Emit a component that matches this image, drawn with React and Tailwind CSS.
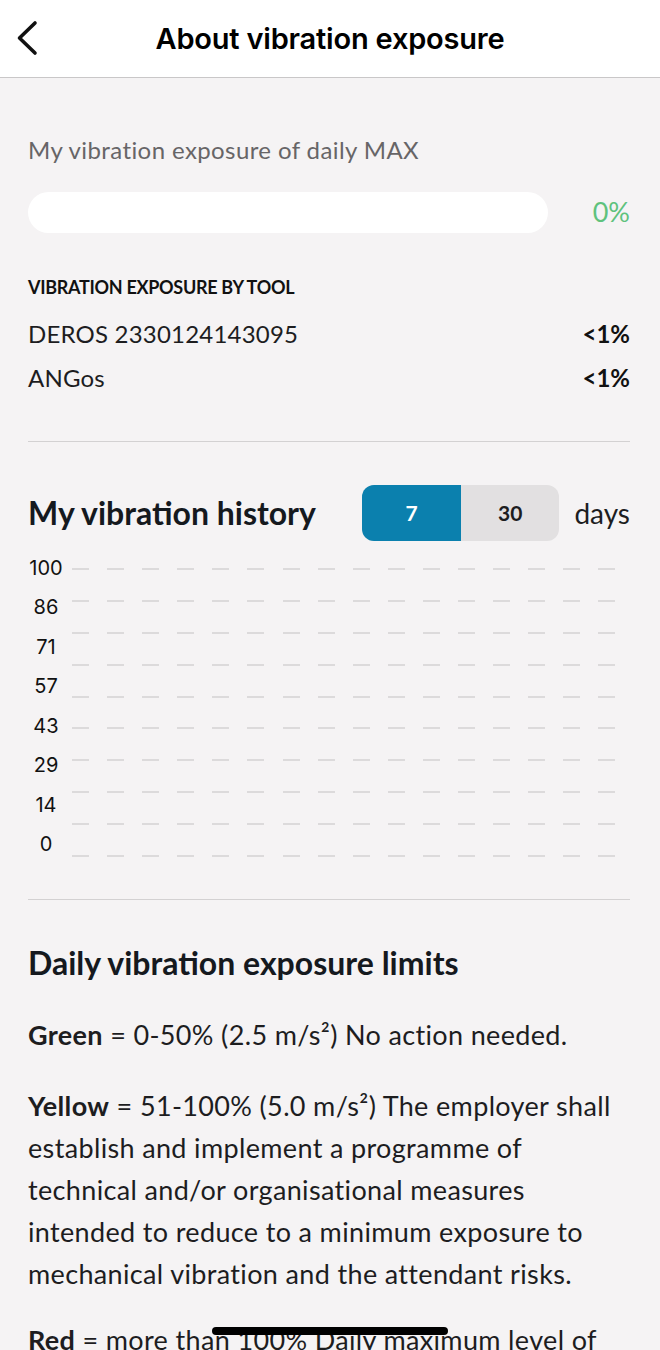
import React, { useState } from 'react';

const yLabels = ['100', '86', '71', '57', '43', '29', '14', '0'];
const gridLines = Array.from({ length: 10 });

const tools = [
  { name: 'DEROS 2330124143095', value: '<1%' },
  { name: 'ANGos', value: '<1%' },
];

// dashed grid row for the empty history chart
const DashLine = () => (
  <div className="h-[2px] w-full bg-[repeating-linear-gradient(to_right,#dcdadb_0_17px,transparent_17px_35.1px)]" />
);

export default function App() {
  const [range, setRange] = useState(7);

  return (
    <div className="relative min-h-screen w-full bg-[#f5f3f4] font-['Lato','Noto_Sans',sans-serif] text-[#1b1f24]">
      {/* Top bar */}
      <header className="relative flex h-[78px] items-center justify-center border-b border-[#c9c7c8] bg-white">
        <button className="absolute left-[14px] top-[19px] p-0">
          <svg width="26" height="38" viewBox="0 0 26 38" fill="none">
            <polyline points="21,4 5.5,19 21,34" stroke="#111" strokeWidth="3.6" strokeLinecap="round" strokeLinejoin="round" />
          </svg>
        </button>
        <h1 className="font-['Inter',sans-serif] text-[29px] font-semibold tracking-[-0.2px] text-black">About vibration exposure</h1>
      </header>

      <main className="pl-[28px] pr-[30px]">
        {/* Daily max */}
        <p className="mt-[58px] text-[24px] leading-[28px] tracking-[0.4px] text-[#676567]">My vibration exposure of daily MAX</p>
        <div className="mt-[28px] flex items-center">
          <div className="h-[41px] w-[520px] rounded-full bg-white" />
          <span className="ml-auto text-[27px] text-[#5fc27d]">0%</span>
        </div>

        {/* By tool */}
        <p className="mt-[44px] text-[18px] font-bold leading-[20px] tracking-[-0.3px] text-[#111]">VIBRATION EXPOSURE BY TOOL</p>
        <div className="mt-[15px]">
          {tools.map((t) => (
            <div key={t.name} className="flex h-[44px] items-center justify-between text-[24px]">
              <span className="tracking-[0.2px] text-[#1d1d1f]">{t.name}</span>
              <span className="font-bold text-[#111]">{t.value}</span>
            </div>
          ))}
        </div>

        <div className="mt-[41px] h-px bg-[#d3d1d2]" />

        {/* History */}
        <div className="mt-[43px] flex items-center">
          <h2 className="text-[32px] font-bold text-[#15191e]">My vibration history</h2>
          <div className="ml-auto flex h-[56px] w-[197px] overflow-hidden rounded-[12px] bg-[#e2e0e1]">
            <button
              onClick={() => setRange(7)}
              className={range === 7 ? 'flex-1 bg-[#0b80ae] text-[21px] font-bold text-white' : 'flex-1 text-[21px] font-bold text-[#1d1d1f]'}
            >
              7
            </button>
            <button
              onClick={() => setRange(30)}
              className={range === 30 ? 'flex-1 bg-[#0b80ae] text-[21px] font-bold text-white' : 'flex-1 text-[21px] font-bold text-[#1d1d1f]'}
            >
              30
            </button>
          </div>
          <span className="ml-[15px] text-[28px] text-[#1d1d1f]">days</span>
        </div>

        {/* Empty chart */}
        <div className="mt-[16px] flex h-[300px] pr-[13px]">
          <div className="flex h-[298px] w-[36px] flex-col justify-between text-center font-['Inter',sans-serif] text-[20px] leading-[22px] text-[#111]">
            {yLabels.map((l) => (
              <span key={l}>{l}</span>
            ))}
          </div>
          <div className="ml-[8px] flex h-[300px] flex-1 flex-col justify-between pt-[11px]">
            {gridLines.map((_, i) => (
              <DashLine key={i} />
            ))}
          </div>
        </div>

        <div className="mt-[42px] h-px bg-[#d3d1d2]" />

        {/* Limits */}
        <h2 className="mt-[44px] text-[32px] font-bold leading-[38px] text-[#15191e]">Daily vibration exposure limits</h2>
        <p className="mt-[32px] text-[27px] leading-[42px] tracking-[0.35px] text-[#1d1d1f]">
          <span className="font-bold">Green</span> = 0-50% (2.5 m/s²) No action needed.
        </p>
        <p className="mt-[29px] text-[27px] leading-[42px] tracking-[0.35px] text-[#1d1d1f]">
          <span className="font-bold">Yellow</span> = 51-100% (5.0 m/s²) The employer shall establish and implement a programme of technical and/or organisational measures intended to reduce to a minimum exposure to mechanical vibration and the attendant risks.
        </p>
        <p className="mt-[24px] pb-[60px] text-[27px] leading-[42px] tracking-[0.35px] text-[#1d1d1f]">
          <span className="font-bold">Red</span> = more than 100% Daily maximum level of exposure exceeded. Work must stop immediately.
        </p>
      </main>

      {/* Home indicator */}
      <div className="fixed bottom-[15px] left-[212px] h-[8px] w-[236px] rounded-full bg-black" />
    </div>
  );
}
